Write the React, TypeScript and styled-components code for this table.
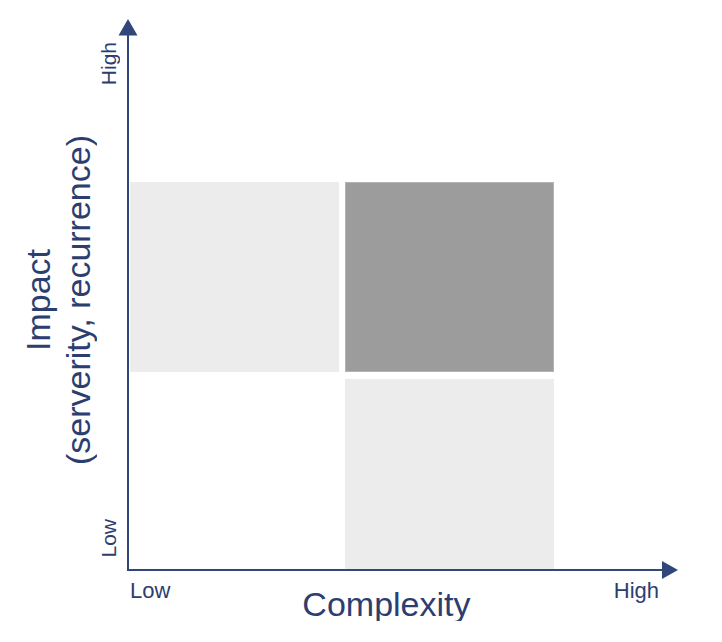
import styled, { createGlobalStyle } from "styled-components";

const GlobalStyle = createGlobalStyle`
  html, body {
    margin: 0;
    padding: 0;
    background: #ffffff;
  }
  body {
    font-family: "Liberation Sans", Arial, Helvetica, sans-serif;
    color: #2c3e70;
  }
`;

const Chart = styled.div`
  display: grid;
  grid-template-columns: 127px 553px;
  grid-template-rows: 552px auto;
  padding-top: 19px;
  width: 722px;
  box-sizing: border-box;
`;

const YLabelArea = styled.div`
  display: flex;
  padding-left: 18px;
`;

const YTitle = styled.div`
  writing-mode: vertical-rl;
  transform: rotate(180deg);
  align-self: center;
  margin-top: 10px;
  width: 80px;
  font-size: 34px;
  line-height: 40px;
  text-align: center;
  white-space: nowrap;
`;

const TitleLine = styled.span`
  display: block;
`;

const YTicks = styled.div`
  display: flex;
  flex-direction: column;
  justify-content: space-between;
  padding: 23px 0 13px;
  width: 21px;
`;

const YTick = styled.span`
  writing-mode: vertical-rl;
  transform: rotate(180deg);
  font-size: 21px;
  line-height: 1;
  white-space: nowrap;
`;

const PlotFrame = styled.div`
  position: relative;
`;

const Quadrants = styled.div`
  display: grid;
  grid-template-columns: 209px 209px;
  grid-template-rows: 190px 190px;
  column-gap: 6px;
  row-gap: 7px;
  padding: 163px 0 0 3px;
`;

type Tone = "light" | "dark" | "empty";

const Quadrant = styled.div<{ $tone: Tone }>`
  box-sizing: border-box;
  background: ${({ $tone }) =>
    $tone === "dark" ? "#9c9c9c" : $tone === "light" ? "#ececec" : "transparent"};
  border: ${({ $tone }) => ($tone === "dark" ? "1px solid #b4b4b4" : "none")};
`;

const Axes = styled.svg`
  position: absolute;
  inset: 0;
  overflow: visible;
  pointer-events: none;
`;

const XLabelRow = styled.div`
  grid-column: 2;
  display: flex;
  align-items: flex-start;
  padding: 9px 21px 0 3px;
`;

const XTick = styled.span`
  font-size: 22px;
  line-height: 1;
`;

const XTitle = styled.span`
  font-size: 34px;
  line-height: 1;
  margin: 7px auto 0 132px;
`;

const AXIS = "#31477c";

const AxisLines = () => (
  <Axes width="553" height="552" viewBox="0 0 553 552">
    <line x1="1" y1="14" x2="1" y2="552" stroke={AXIS} strokeWidth="2" />
    <line x1="0" y1="551" x2="540" y2="551" stroke={AXIS} strokeWidth="2" />
    <polygon points="1,0 -8.5,16.5 10.5,16.5" fill={AXIS} />
    <polygon points="551,551 535,542 535,560" fill={AXIS} />
  </Axes>
);

export default function App() {
  return (
    <>
      <GlobalStyle />
      <Chart>
        <YLabelArea>
          <YTitle>
            <TitleLine>Impact</TitleLine>
            <TitleLine>(serverity, recurrence)</TitleLine>
          </YTitle>
          <YTicks>
            <YTick>High</YTick>
            <YTick>Low</YTick>
          </YTicks>
        </YLabelArea>
        <PlotFrame>
          <Quadrants>
            <Quadrant $tone="light" />
            <Quadrant $tone="dark" />
            <Quadrant $tone="empty" />
            <Quadrant $tone="light" />
          </Quadrants>
          <AxisLines />
        </PlotFrame>
        <XLabelRow>
          <XTick>Low</XTick>
          <XTitle>Complexity</XTitle>
          <XTick>High</XTick>
        </XLabelRow>
      </Chart>
    </>
  );
}
